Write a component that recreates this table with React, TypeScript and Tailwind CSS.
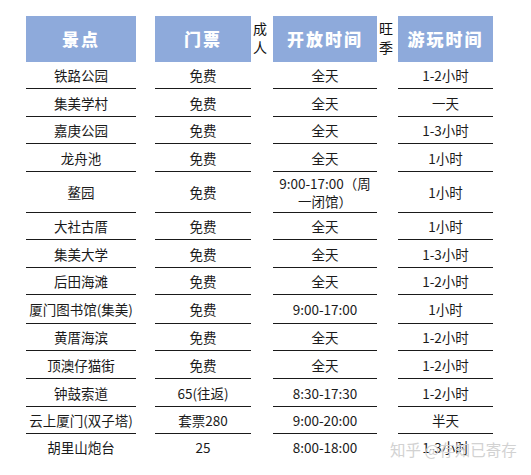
import React from 'react';

type Row = {
  spot: string;
  ticket: string;
  hours: React.ReactNode;
  duration: string;
  h: string;
};

const rows: Row[] = [
  { spot: '铁路公园', ticket: '免费', hours: '全天', duration: '1-2小时', h: 'h-[26px]' },
  { spot: '集美学村', ticket: '免费', hours: '全天', duration: '一天', h: 'h-[28px]' },
  { spot: '嘉庚公园', ticket: '免费', hours: '全天', duration: '1-3小时', h: 'h-[27px]' },
  { spot: '龙舟池', ticket: '免费', hours: '全天', duration: '1小时', h: 'h-[28px]' },
  {
    spot: '鳌园',
    ticket: '免费',
    hours: (
      <>
        9:00-17:00（周
        <br />
        一闭馆）
      </>
    ),
    duration: '1小时',
    h: 'h-[41px]',
  },
  { spot: '大社古厝', ticket: '免费', hours: '全天', duration: '1小时', h: 'h-[27px]' },
  { spot: '集美大学', ticket: '免费', hours: '全天', duration: '1-3小时', h: 'h-[28px]' },
  { spot: '后田海滩', ticket: '免费', hours: '全天', duration: '1-2小时', h: 'h-[27px]' },
  { spot: '厦门图书馆(集美)', ticket: '免费', hours: '9:00-17:00', duration: '1小时', h: 'h-[29px]' },
  { spot: '黄厝海滨', ticket: '免费', hours: '全天', duration: '1-2小时', h: 'h-[27px]' },
  { spot: '顶澳仔猫街', ticket: '免费', hours: '全天', duration: '1-2小时', h: 'h-[28px]' },
  { spot: '钟鼓索道', ticket: '65(往返)', hours: '8:30-17:30', duration: '1-2小时', h: 'h-[28px]' },
  { spot: '云上厦门(双子塔)', ticket: '套票280', hours: '9:00-20:00', duration: '半天', h: 'h-[27px]' },
  { spot: '胡里山炮台', ticket: '25', hours: '8:00-18:00', duration: '1-3小时', h: 'h-[27px]' },
];

const Head = ({ w, children }: { w: string; children: React.ReactNode }) => (
  <div
    className={`${w} h-[46px] bg-[#8eaadb] flex items-center justify-center text-white text-[17px] font-black tracking-[2px]`}
  >
    {children}
  </div>
);

const Side = ({ w, children }: { w: string; children: React.ReactNode }) => (
  <div className={`${w} shrink-0 self-stretch pl-[2px] pt-[3px] text-[14px] leading-[19px] text-[#111]`}>
    {children}
  </div>
);

export default function App() {
  return (
    <div
      className="relative w-[531px] h-[475px] bg-white overflow-hidden pt-[16px] pl-[26px]"
      style={{ fontFamily: '"Microsoft YaHei", "Noto Sans CJK SC", "Liberation Sans", sans-serif' }}
    >
      <div className="flex">
        <Head w="w-[110px]">景点</Head>
        <div className="w-[19px]" />
        <Head w="w-[96px]">门票</Head>
        <Side w="w-[22px]">
          <div>成</div>
          <div>人</div>
        </Side>
        <Head w="w-[104px]">开放时间</Head>
        <Side w="w-[21px]">
          <div>旺</div>
          <div>季</div>
        </Side>
        <Head w="w-[95px]">游玩时间</Head>
      </div>

      {rows.map((r, i) => {
        const line = i === 0 ? '' : 'border-t border-[#1a1a1a]';
        const cell = `${r.h} ${line} shrink-0 flex items-center justify-center text-center text-[13.5px] leading-[18px] text-[#1a1a1a]`;
        return (
          <div key={r.spot} className="flex">
            <div className={`w-[110px] ${cell}`}>{r.spot}</div>
            <div className="w-[19px] shrink-0" />
            <div className={`w-[96px] ${cell}`}>{r.ticket}</div>
            <div className="w-[22px] shrink-0" />
            <div className={`w-[104px] ${cell}`}>{r.hours}</div>
            <div className="w-[21px] shrink-0" />
            <div className={`w-[95px] ${cell}`}>{r.duration}</div>
          </div>
        );
      })}

      <div className="absolute left-[390px] top-[438px] text-[15.5px] leading-[22px] text-[#d2d2d2] whitespace-nowrap">
        知乎 @存知已寄存
      </div>
    </div>
  );
}
